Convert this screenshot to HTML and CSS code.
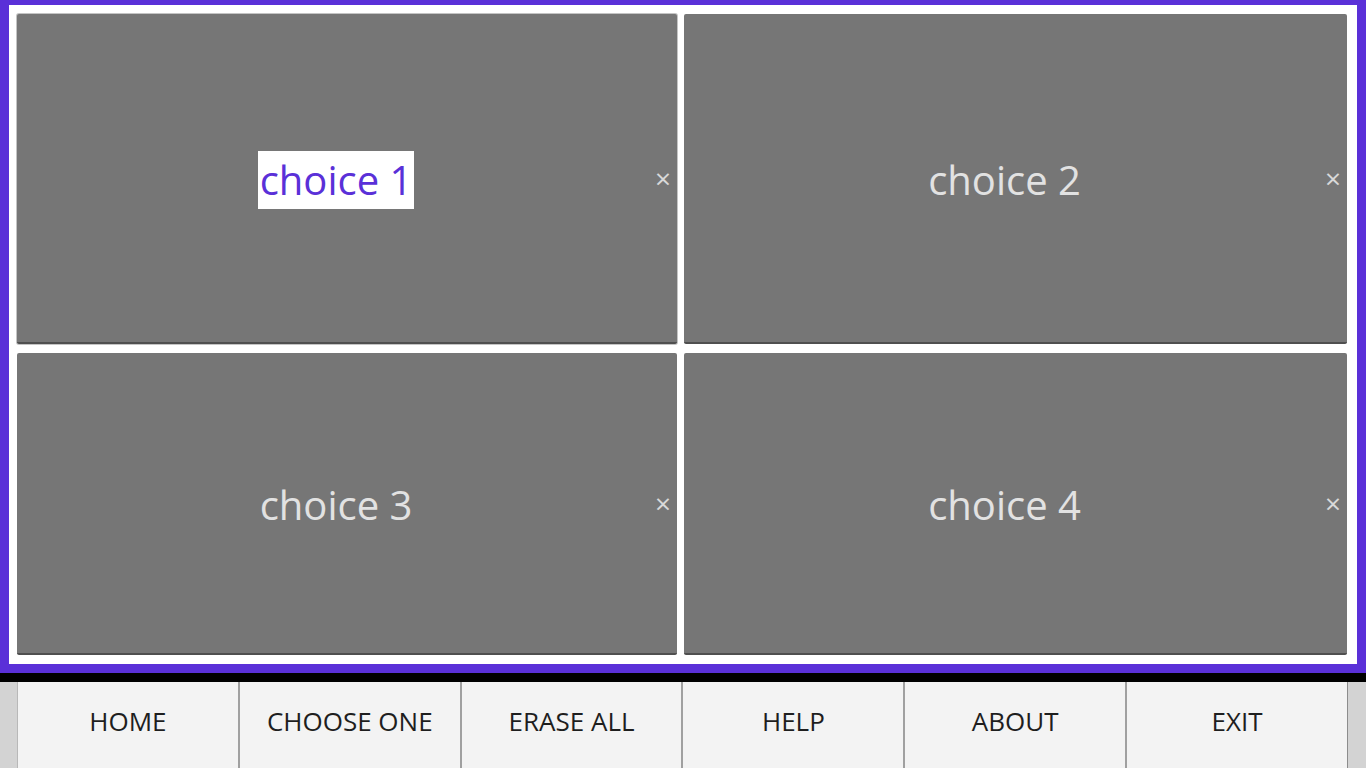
FILE: index.html
```html
<!DOCTYPE html>
<html>
<head>
<meta charset="utf-8">
<link rel="stylesheet" href="styles.css">
</head>
<body>
<div class="frame">
  <div class="card focused">
    <div class="label"><span class="sel">choice 1</span></div>
    <div class="close">×</div>
  </div>
  <div class="card">
    <div class="label">choice 2</div>
    <div class="close">×</div>
  </div>
  <div class="card">
    <div class="label">choice 3</div>
    <div class="close">×</div>
  </div>
  <div class="card">
    <div class="label">choice 4</div>
    <div class="close">×</div>
  </div>
</div>
<div class="nav">
  <div class="strip left"></div>
  <div class="btn">HOME</div>
  <div class="btn">CHOOSE ONE</div>
  <div class="btn">ERASE ALL</div>
  <div class="btn">HELP</div>
  <div class="btn">ABOUT</div>
  <div class="btn">EXIT</div>
  <div class="strip right"></div>
</div>
</body>
</html>
```
FILE: styles.css
```css
html, body {
  margin: 0;
  padding: 0;
  background: #000;
  width: 1366px;
  height: 768px;
  overflow: hidden;
  font-family: "Open Sans", "Noto Sans", sans-serif;
}
.frame {
  box-sizing: border-box;
  height: 673px;
  border: 9px solid #5a30d8;
  border-top-width: 5px;
  background: #fff;
  padding: 9px 10px 9px 8px;
  display: grid;
  grid-template-columns: 660px 663px;
  grid-template-rows: 330px 302px;
  column-gap: 7px;
  row-gap: 9px;
}
.card {
  box-sizing: border-box;
  background: #767676;
  border-radius: 2px;
  border-bottom: 2px solid #4f4f4f;
  display: flex;
  align-items: center;
  color: #e2e2e2;
}
.card.focused {
  box-shadow: 0 0 0 1px #c4c4c4;
}
.label {
  flex: 1;
  text-align: center;
  font-size: 40px;
  line-height: 58px;
  padding-top: 4px;
}
.sel {
  background: #fff;
  color: #5a30d8;
  display: inline-block;
  padding: 0 2px;
}
.close {
  width: 22px;
  text-align: left;
  font-size: 28px;
  color: #d9d9d9;
}
.nav {
  margin-top: 9px;
  height: 86px;
  display: flex;
  background: #f3f3f3;
}
.strip {
  background: #d3d3d3;
}
.strip.left {
  width: 17px;
  border-right: 1px solid #b8b8b8;
}
.strip.right {
  width: 18px;
  border-left: 1px solid #8c8c8c;
}
.btn {
  flex: 1;
  display: flex;
  align-items: center;
  justify-content: center;
  font-size: 26px;
  color: #1e1e1e;
  padding-bottom: 8px;
}
.btn + .btn {
  border-left: 2px solid #a0a0a0;
}
```
